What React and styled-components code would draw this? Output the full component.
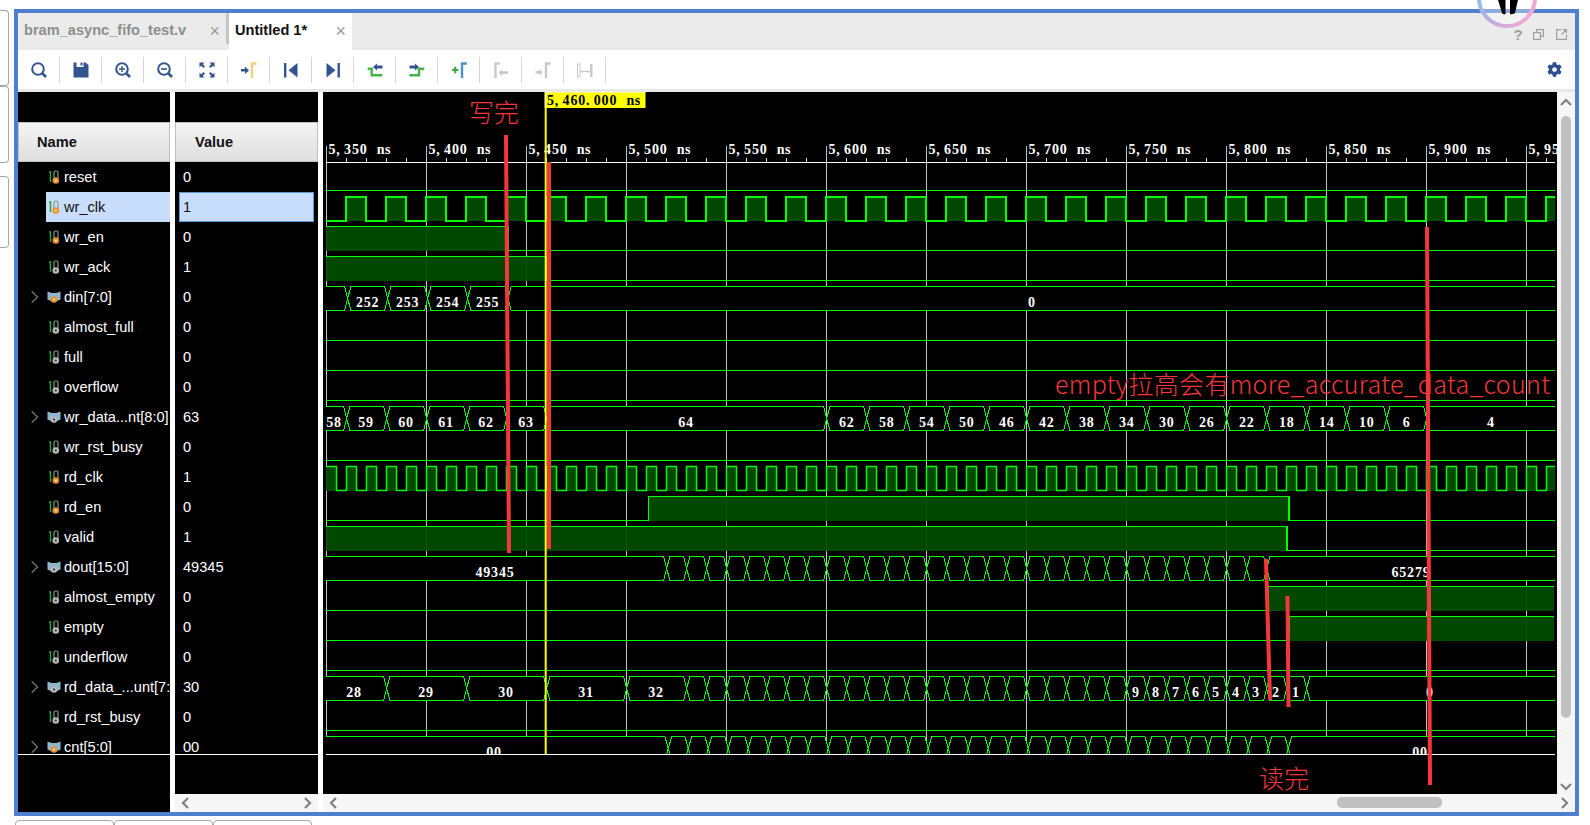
import React from 'react';
import styled, { createGlobalStyle } from 'styled-components';
import { FaCog } from 'react-icons/fa';

const Global = createGlobalStyle`
  html, body { margin: 0; padding: 0; background: #fff; overflow: hidden; }
  body { font-family: "Liberation Sans", Arial, sans-serif; }
  * { box-sizing: border-box; }
`;

const Page = styled.div`
  position: relative; width: 1590px; height: 825px; display: flex; overflow: hidden; background: #fff;
`;
const SideStrip = styled.div`
  width: 14px; padding-top: 10px; display: flex; flex-direction: column; flex: none;
`;
const SideBox = styled.div`
  width: 10px; height: ${p => p.$h}px; margin-left: -1px; margin-bottom: ${p => p.$gap || 0}px;
  border: 1px solid #a8a8a8; border-left: none; border-radius: 0 4px 4px 0;
`;
const Column = styled.div`
  width: 1565px; padding-top: 9px; display: flex; flex-direction: column; flex: none;
`;
const Frame = styled.div`
  height: 807px; border: 4px solid #4f80d0; display: flex; flex-direction: column; background: #fff;
`;
const TabBar = styled.div`
  height: 37px; flex: none; display: flex; align-items: stretch; background: #ebebeb;
`;
const Tab = styled.div`
  width: ${p => p.$w}px; flex: none; display: flex; align-items: center; justify-content: space-between;
  padding: 0 6px 4px 6px; font-size: 14.6px; font-weight: 700;
  color: ${p => (p.$active ? '#111' : '#8e8e8e')};
  background: ${p => (p.$active ? '#fff' : '#ebebeb')};
`;
const TabGrip = styled.div`
  width: 3px; height: 31px; background: #c4c4c4; flex: none;
`;
const Close = styled.span`
  font-size: 18px; font-weight: 400; color: #9a9a9a; position: relative; top: 2px;
`;
const TabTools = styled.div`
  margin-left: auto; display: flex; align-items: center; padding: 5px 8px 0 0;
`;
const Help = styled.span`
  font-size: 15px; font-weight: 700; color: #a0a0a0; width: 14px; text-align: center; margin-right: 8px;
`;
const WinIcon = styled.svg`
  display: block; flex: none; margin-right: ${p => p.$mr || 0}px;
`;
const Toolbar = styled.div`
  height: 39px; flex: none; display: flex; align-items: center; background: #fff;
`;
const ToolButton = styled.div`
  width: 42px; height: 26px; flex: none; display: flex; align-items: center; justify-content: center;
  border-right: 1px solid #d6d6d6; padding-left: 1px;
`;
const Gear = styled.div`
  margin-left: auto; margin-right: 13px; display: flex; color: #2d4f8e;
`;
const Sep = styled.div`
  height: 3px; flex: none; background: #e8e8e8;
`;
const Main = styled.div`
  flex: 1; min-height: 0; display: flex; background: #fff;
`;
const Panel = styled.div`
  width: ${p => p.$w}px; flex: none; display: flex; flex-direction: column; background: #000;
`;
const Gap = styled.div`
  width: 5px; flex: none; background: #fff;
`;
const PanelTop = styled.div`
  height: 30px; flex: none; background: #000;
`;
const Header = styled.div`
  height: 40px; flex: none; display: flex; align-items: center; padding-left: ${p => p.$pad}px;
  font-size: 14.6px; font-weight: 700; color: #111;
  background: linear-gradient(#f4f4f4, #dedede); border: 1px solid #c0c0c0;
`;
const List = styled.div`
  height: 593px; flex: none; overflow: hidden; border-bottom: 1px solid #fff;
`;
const NameRow = styled.div`
  height: 30px; display: flex; align-items: stretch; color: #fff; font-size: 14.6px;
`;
const Twist = styled.div`
  width: 28px; flex: none; display: flex; align-items: center; justify-content: center; padding-left: 3px;
`;
const NameCell = styled.div`
  flex: 1; min-width: 0; display: flex; align-items: center; padding-left: 2px;
  white-space: nowrap; overflow: hidden;
  background: ${p => (p.$sel ? '#c8ddfb' : 'transparent')};
  color: ${p => (p.$sel ? '#111' : '#fff')};
`;
const SignalIcon = styled.svg`
  display: block; flex: none; margin: 0 3px 0 ${p => (p.$bus ? -1 : 0)}px;
`;
const ValueRow = styled.div`
  height: 30px; display: flex; align-items: stretch; color: #fff; font-size: 14.6px; padding: 0 4px;
`;
const ValueCell = styled.div`
  flex: 1; display: flex; align-items: center; padding-left: 3px;
  border: 1px solid ${p => (p.$sel ? '#5b9bd5' : 'transparent')};
  background: ${p => (p.$sel ? '#c8ddfb' : 'transparent')};
  color: ${p => (p.$sel ? '#111' : '#fff')};
`;
const PanelFill = styled.div`
  flex: 1; background: #000;
`;
const HBar = styled.div`
  height: 18px; flex: none; background: #f6f6f6; display: flex; align-items: center;
  justify-content: space-between; padding: 0 5px; position: relative;
`;
const HThumb = styled.div`
  position: absolute; left: 1014px; top: 3px; width: 105px; height: 11px; background: #c0c0c0; border-radius: 5px;
`;
const WaveColumn = styled.div`
  flex: 1; min-width: 0; display: flex; flex-direction: column;
`;
const WaveRow = styled.div`
  display: flex; height: 702px; flex: none;
`;
const VBar = styled.div`
  width: 18px; flex: none; background: #f6f6f6; display: flex; flex-direction: column; align-items: center;
  padding: 5px 0 2px;
`;
const VThumb = styled.div`
  width: 10px; height: 602px; margin-top: 7px; background: #c0c0c0; border-radius: 5px;
`;
const VDown = styled.div`
  margin-top: auto; display: flex;
`;
const WaveSvg = styled.svg`
  display: block; flex: none; background: #000;
`;
const Mono = styled.text`
  font-family: "Liberation Serif", serif; font-size: 14px; font-weight: 700; fill: ${p => p.$c || '#fff'};
`;
const Note = styled.text`
  font-family: "Noto Sans CJK SC", "Liberation Sans", sans-serif; font-size: ${p => p.$s || 25}px; fill: #f4373a; font-weight: 300;
`;
const BottomTabs = styled.div`
  display: flex; margin: 4px 0 0 1px;
`;
const BottomTab = styled.div`
  width: 99px; height: 12px; border: 1px solid #a8a8a8; border-radius: 4px 4px 0 0;
`;
const Logo = styled.svg`
  position: absolute; left: 1470px; top: 0; pointer-events: none;
`;

const CELL = 7.8;
const Cells = ({ x, y, s, center, c }) => {
  const start = center ? x - (s.length * CELL) / 2 : x;
  const extra = ch => (ch === 'n' ? 1.5 : ch === 's' ? 2 : 0);
  const xs = s.split('').map((ch, k) => (start + k * CELL + extra(ch)).toFixed(1)).join(' ');
  return <Mono x={xs} y={y} $c={c}>{s}</Mono>;
};

const NAVY = '#34548f';
const GREY = '#c9c9c9';
const Ic = ({ children }) => <svg width="24" height="24" viewBox="0 0 24 24" fill="none">{children}</svg>;

const Magnifier = ({ children }) => (
  <Ic>
    <circle cx="11" cy="11" r="5.8" stroke={NAVY} strokeWidth="2" />
    <path d="M15.5 15.5 L19 19" stroke={NAVY} strokeWidth="2.6" />
    {children}
  </Ic>
);
const toolIcons = [
  <Magnifier key="s" />,
  <Ic key="save"><path d="M4.500 4.500h3v4.500h7V4.500h2l3 2.500v12.500h-15z" fill={NAVY} /><rect x="11.500" y="4.500" width="2" height="3" fill={NAVY} /></Ic>,
  <Magnifier key="zi"><path d="M8 11h6M11 8v6" stroke={NAVY} strokeWidth="1.4" /></Magnifier>,
  <Magnifier key="zo"><path d="M8 11h6" stroke={NAVY} strokeWidth="1.6" /></Magnifier>,
  <Ic key="fit">
    <path d="M4.500 4.500h5l-1.700 1.700 2.200 2.200-1.600 1.600-2.200-2.200-1.700 1.700zM19.500 4.500v5l-1.700-1.700-2.200 2.200-1.600-1.600 2.200-2.200-1.700-1.700zM4.500 19.500v-5l1.700 1.700 2.200-2.200 1.600 1.600-2.200 2.200 1.700 1.700zM19.500 19.500h-5l1.700-1.700-2.200-2.200 1.600-1.600 2.200 2.200 1.700-1.700z" fill={NAVY} />
  </Ic>,
  <Ic key="gc">
    <path d="M4 11h4V8.500L12 12.500 8 16v-2.500H4z" fill={NAVY} />
    <path d="M15 20V5.500h4.500" stroke="#e9d47c" strokeWidth="2.400" />
  </Ic>,
  <Ic key="first"><rect x="5" y="5" width="2.400" height="14.500" fill={NAVY} /><path d="M18.500 5v14.500L9.500 12.200z" fill={NAVY} /></Ic>,
  <Ic key="last"><rect x="16.500" y="5" width="2.400" height="14.500" fill={NAVY} /><path d="M5.500 5v14.500l9-7.300z" fill={NAVY} /></Ic>,
  <Ic key="pe">
    <path d="M4.700 10.800h4v6.500h10.600" stroke="#45b549" strokeWidth="2.400" />
    <path d="M10 9l4-3.500V7.500h5.500v3H14v2z" fill={NAVY} />
  </Ic>,
  <Ic key="ne">
    <path d="M4.300 17.300H14v-6.500h5.300" stroke="#45b549" strokeWidth="2.400" />
    <path d="M14 9l-4-3.500V7.500H4.500v3H10v2z" fill={NAVY} />
  </Ic>,
  <Ic key="am">
    <path d="M5 12h6.500M8.200 8.700v6.600" stroke="#45a549" strokeWidth="2.200" />
    <path d="M15 20V5.500h4.800" stroke="#4b92c6" strokeWidth="2.400" />
  </Ic>,
  <Ic key="pm">
    <path d="M6.500 20V5.500h4.500" stroke={GREY} strokeWidth="2.400" />
    <path d="M9.500 14.500l3.500-3.300v2h6v2.700h-6v2z" fill={GREY} />
  </Ic>,
  <Ic key="nm">
    <path d="M4.500 13h3.800v-2l3.500 3.300-3.500 3.300v-2H4.500z" fill={GREY} />
    <path d="M15 20V5.500h4.500" stroke={GREY} strokeWidth="2.400" />
  </Ic>,
  <Ic key="sw">
    <rect x="4.500" y="6" width="2.500" height="13" stroke={GREY} strokeWidth="1" />
    <rect x="17" y="6" width="2.500" height="13" fill={GREY} />
    <path d="M8 13.500h8M9.500 12l-1.500 1.500 1.500 1.500M14.500 12l1.500 1.500-1.500 1.500" stroke={GREY} strokeWidth="1" />
  </Ic>,
];

const Chev = ({ dir = 'right', size = 12, c = '#808080', w = 2.2 }) => {
  const d = { right: 'M4 1l5 5-5 5', left: 'M8 1L3 6l5 5', up: 'M1 8l5-5 5 5', down: 'M1 4l5 5 5-5' }[dir];
  return <svg width={size} height={size} viewBox="0 0 12 12" fill="none"><path d={d} stroke={c} strokeWidth={w} /></svg>;
};

const dotColor = o => (o ? '#e8912a' : '#b8b8b8');
const ScalarIcon = ({ o }) => (
  <SignalIcon width="13" height="16" viewBox="0 0 13 16" fill="none">
    <path d="M1 3h1.500v10" stroke="#2f9e44" strokeWidth="1.500" />
    <rect x="6" y="2" width="4" height="8" rx="1.500" stroke="#7f9f86" strokeWidth="1.200" />
    <circle cx="7.800" cy="11.500" r="3.300" fill={dotColor(o)} />
    <circle cx="7.800" cy="11.500" r="1.100" fill={o ? '#fff2d0' : '#333'} />
  </SignalIcon>
);
const BusIcon = ({ o }) => (
  <SignalIcon $bus width="14" height="16" viewBox="0 0 14 16" fill="none">
    <path d="M0.500 2.500l4.200 1.500h4.600l4.200-1.500v8l-4.200 1.800H4.700l-4.200-1.800z" fill="#8fb6cf" />
    <circle cx="7" cy="10.500" r="3.300" fill={dotColor(o)} />
    <circle cx="7" cy="10.500" r="1.100" fill={o ? '#fff2d0' : '#333'} />
  </SignalIcon>
);

const signals = [
  ['reset', '0', 0, 1], ['wr_clk', '1', 0, 1], ['wr_en', '0', 0, 1], ['wr_ack', '1', 0, 0],
  ['din[7:0]', '0', 1, 1], ['almost_full', '0', 0, 0], ['full', '0', 0, 0], ['overflow', '0', 0, 0],
  ['wr_data...nt[8:0]', '63', 1, 0], ['wr_rst_busy', '0', 0, 0], ['rd_clk', '1', 0, 1], ['rd_en', '0', 0, 1],
  ['valid', '1', 0, 0], ['dout[15:0]', '49345', 1, 0], ['almost_empty', '0', 0, 0], ['empty', '0', 0, 0],
  ['underflow', '0', 0, 0], ['rd_data_...unt[7:0]', '30', 1, 0], ['rd_rst_busy', '0', 0, 0], ['cnt[5:0]', '00', 1, 1],
];

const X0 = 326, X1 = 1555;
const GREEN = '#00ff00';
const FILL = '#004c00';
const rowTop = i => 162 + 30 * i;
const hi = t => t + 4.5;
const lo = t => t + 28.5;

function level(i, start, toggles, end = X1, w = 1.5, crisp = true) {
  const t = rowTop(i);
  let v = start, x = X0, d = `M${x} ${v ? hi(t) : lo(t)}`, fill = '';
  toggles.concat([end]).forEach((nx, k, arr) => {
    const n = Math.min(nx, end);
    if (v) fill += `M${x} ${hi(t)}H${n}V${t + 29}H${x}z`;
    d += `H${n}`;
    if (k < arr.length - 1) { v = !v; d += `V${v ? hi(t) : lo(t)}`; }
    x = n;
  });
  return (
    <g key={`l${i}`}>
      <path d={fill} fill={FILL} opacity="0.93" />
      <path d={d} fill="none" stroke={GREEN} strokeWidth={w} shapeRendering={crisp ? 'crispEdges' : 'auto'} />
    </g>
  );
}

function bus(i, xs, labels, h = 3.2, end = X1) {
  const t = rowTop(i), a = hi(t), b = t + 28.5, m = (a + b) / 2;
  const pts = [X0, ...xs, end];
  let fill = '', top = '';
  pts.slice(0, -1).forEach((p, k) => {
    const q = pts[k + 1];
    const first = k === 0, last = k === pts.length - 2;
    const l = first ? p : p + h, r = last ? q : q - h;
    fill += `M${l} ${a}H${r}${last ? '' : `L${q} ${m}`}L${r} ${b}H${l}${first ? '' : `L${p} ${m}`}z`;
    top += `M${l} ${a}H${r}${last ? '' : `L${q + h} ${b}`}M${l} ${b}H${r}${last ? '' : `L${q + h} ${a}`}`;
  });
  return (
    <g key={`b${i}`}>
      <path d={fill} fill="#000" />
      <path d={top} fill="none" stroke={GREEN} strokeWidth="1" shapeRendering="crispEdges" />
      {labels.map(([x, s]) => (
        <Cells key={`${x}${s}`} x={x} y={t + 25} s={s} center />
      ))}
    </g>
  );
}

const range = (from, step, n) => Array.from({ length: n }, (_, k) => from + step * k);

const dataCounts = [62, 58, 54, 50, 46, 42, 38, 34, 30, 26, 22, 18, 14, 10, 6];
const wrDataX = [346.7, 386.7, 426.7, 466.7, 506.7, 546.7, ...range(826.7, 40, 16)];
const wrDataLabels = [
  [334, '58'], [366, '59'], [406, '60'], [446, '61'], [486, '62'], [526, '63'], [686, '64'],
  ...dataCounts.map((v, k) => [846.7 + 40 * k, String(v)]),
  [1491, '4'],
];
const rdDataLabels = [
  [354, '28'], [426, '29'], [506, '30'], [586, '31'], [656, '32'],
  ...[9, 8, 7, 6, 5, 4, 3, 2, 1].map((v, k) => [1136 + 20 * k, String(v)]),
  [1430, '0'],
];
const rulerLabels = ['5,350', '5,400', '5,450', '5,500', '5,550', '5,600', '5,650', '5,700', '5,750', '5,800', '5,850', '5,900', '5,950'];

const Wave = () => (
  <WaveSvg width="1234" height="702" viewBox="323 92 1234 702">
    {rulerLabels.map((s, k) => {
      const x = 326.5 + 100 * k;
      return (
        <g key={s}>
          <path d={`M${x} 146V754`} stroke="#c2c2c2" strokeWidth="1" />
          <Cells x={x + 2} y={154} s={`${s} ns`} />
        </g>
      );
    })}
    <path d={range(346.5, 20, 61).filter(x => x < X1).map(x => `M${x} 158V162`).join('')} stroke="#d8d8d8" strokeWidth="1" />
    <path d={`M${X0} 162.500H${X1}`} stroke="#fff" strokeWidth="1" />

    {[0, 5, 6, 7, 9, 16, 18].map(i => level(i, false, [], X1, 1))}
    {level(1, false, range(346, 20, 61), X1, 2)}
    {level(2, true, [508], X1, 1)}
    {level(3, true, [546], X1, 1)}
    {level(10, true, range(336.5, 10, 122), X1, 1.5, false)}
    {level(11, false, [648.7, 1289], X1, 1.5)}
    {level(12, true, [1287], X1, 1.5)}
    {level(14, false, [1268], 1554, 1)}
    {level(15, false, [1289], 1554, 1)}

    {bus(4, [347.7, 387.7, 427.7, 467.7, 508], [[367.7, '252'], [407.7, '253'], [447.7, '254'], [487.7, '255'], [1032, '0']])}
    {bus(8, wrDataX, wrDataLabels)}
    {bus(13, range(666.7, 20, 31), [[495, '49345'], [1411, '65279']])}
    {bus(17, [386.7, 466.7, 546.7, 626.7, ...range(686.7, 20, 32)], rdDataLabels)}
    {bus(19, range(668.3, 20, 32), [[494, '00'], [1420, '00']], 3.4)}

    <rect x="323" y="754.500" width="1234" height="40" fill="#000" />
    <path d={`M${X0} 754.500H${X1}`} stroke="#fff" strokeWidth="1" />

    <path d="M545.700 108V754" stroke="#ffff00" strokeWidth="2" />
    <rect x="545" y="92" width="100.500" height="16" fill="#ffff00" />
    <path d="M545 108V92H645.500" fill="none" stroke="#fff" strokeWidth="1" />
    <Cells x={547} y={105} s="5,460.000 ns" c="#000" />

    <g stroke="#f4373a" strokeWidth="4" fill="none">
      <path d="M506 135L509 553" />
      <path d="M549 162L549 549" />
      <path d="M1266 559L1270 700" />
      <path d="M1287.500 596L1288.500 707" />
      <path d="M1427 227L1430 785" />
    </g>
    <Note x={469} y={122} textLength="50" lengthAdjust="spacing">写完</Note>
    <Note x={1259} y={788} textLength="50" lengthAdjust="spacing">读完</Note>
    <Note x={1055} y={394} textLength="495" lengthAdjust="spacing">empty拉高会有more_accurate_data_count</Note>
  </WaveSvg>
);

export default function App() {
  return (
    <Page>
      <Global />
      <SideStrip>
        <SideBox $h={76} />
        <SideBox $h={77} $gap={13} />
        <SideBox $h={72} />
      </SideStrip>
      <Column>
        <Frame>
          <TabBar>
            <Tab $w={208}>bram_async_fifo_test.v<Close>×</Close></Tab>
            <TabGrip />
            <Tab $active $w={123}>Untitled 1*<Close>×</Close></Tab>
            <TabTools>
              <Help>?</Help>
              <WinIcon $mr={12} width="11" height="11" viewBox="0 0 11 11" fill="none" stroke="#a0a0a0" strokeWidth="1.200">
                <rect x="0.600" y="3.600" width="6.800" height="6.800" /><path d="M3.600 3.600V0.600h6.800v6.800H7.400" />
              </WinIcon>
              <WinIcon width="11" height="11" viewBox="0 0 11 11" fill="none" stroke="#a0a0a0" strokeWidth="1.200">
                <path d="M10.400 5.500v4.900H0.600V0.600h4.900M5.500 5.500l4.900-4.900M7 0.600h3.400V4" />
              </WinIcon>
            </TabTools>
          </TabBar>
          <Toolbar>
            {toolIcons.map(ic => <ToolButton key={ic.key}>{ic}</ToolButton>)}
            <Gear><FaCog size={15} /></Gear>
          </Toolbar>
          <Sep />
          <Main>
            <Panel $w={152}>
              <PanelTop />
              <Header $pad={18}>Name</Header>
              <List>
                {signals.map(([n, , isBus, o]) => (
                  <NameRow key={n}>
                    <Twist>{isBus ? <Chev dir="right" size={14} c="#6f6f6f" w={1.2} /> : null}</Twist>
                    <NameCell $sel={n === 'wr_clk'}>
                      {isBus ? <BusIcon o={o} /> : <ScalarIcon o={o} />}
                      <span>{n}</span>
                    </NameCell>
                  </NameRow>
                ))}
              </List>
              <PanelFill />
            </Panel>
            <Gap />
            <Panel $w={143}>
              <PanelTop />
              <Header $pad={19}>Value</Header>
              <List>
                {signals.map(([n, v]) => (
                  <ValueRow key={n}>
                    <ValueCell $sel={n === 'wr_clk'}>{v}</ValueCell>
                  </ValueRow>
                ))}
              </List>
              <PanelFill />
              <HBar><Chev dir="left" /><Chev dir="right" /></HBar>
            </Panel>
            <Gap />
            <WaveColumn>
              <WaveRow>
                <Wave />
                <VBar>
                  <Chev dir="up" />
                  <VThumb />
                  <VDown><Chev dir="down" /></VDown>
                </VBar>
              </WaveRow>
              <HBar>
                <Chev dir="left" />
                <HThumb />
                <Chev dir="right" />
              </HBar>
            </WaveColumn>
          </Main>
        </Frame>
        <BottomTabs>
          <BottomTab /><BottomTab /><BottomTab />
        </BottomTabs>
      </Column>
      <Logo width="80" height="36" viewBox="1470 0 80 36">
        <defs>
          <linearGradient id="ring" x1="0" y1="0" x2="1" y2="0.300">
            <stop offset="0" stopColor="#7cc6ea" />
            <stop offset="0.500" stopColor="#c7a9de" />
            <stop offset="1" stopColor="#f0a9d4" />
          </linearGradient>
        </defs>
        <circle cx="1507" cy="-2" r="28" fill="#ffffff" fillOpacity="0.35" stroke="url(#ring)" strokeWidth="4" />
        <path d="M1498 0H1505.500V14Q1503 15 1502 13ZM1510 0H1518L1515 13Q1512 15 1510 14Z" fill="#000" />
      </Logo>
    </Page>
  );
}
